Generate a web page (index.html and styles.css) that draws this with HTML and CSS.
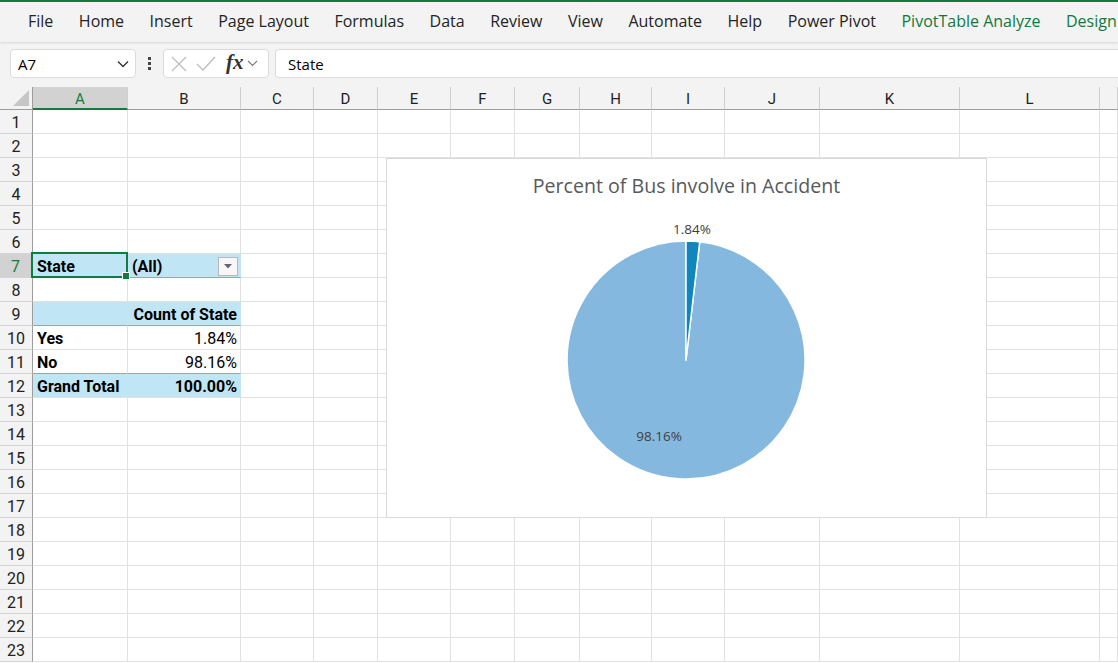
FILE: index.html
```html
<!DOCTYPE html>
<html>
<head>
<meta charset="utf-8">
<link rel="stylesheet" href="styles.css">
</head>
<body>
<div class="app">
  <nav class="ribbon">
    <span>File</span><span>Home</span><span>Insert</span><span>Page Layout</span><span>Formulas</span><span>Data</span><span>Review</span><span>View</span><span>Automate</span><span>Help</span><span>Power Pivot</span><span class="ctx">PivotTable Analyze</span><span class="ctx">Design</span>
  </nav>
  <div class="fbar">
    <div class="namebox"><span>A7</span>
      <svg width="12" height="8" viewBox="0 0 12 8"><polyline points="1,1.5 6,6.5 11,1.5" fill="none" stroke="#333" stroke-width="1.4"/></svg>
    </div>
    <div class="dots"><i></i><i></i><i></i></div>
    <div class="fbtns">
      <svg width="18" height="18" viewBox="0 0 18 18"><path d="M2 2L16 16M16 2L2 16" stroke="#bdbdbd" stroke-width="1.3"/></svg>
      <svg width="20" height="18" viewBox="0 0 20 18"><polyline points="1,9 7,15 19,2" fill="none" stroke="#bdbdbd" stroke-width="1.3"/></svg>
      <span class="fx">fx</span>
      <svg width="11" height="7" viewBox="0 0 11 7"><polyline points="1,1 5.5,5.5 10,1" fill="none" stroke="#777" stroke-width="1.1"/></svg>
    </div>
    <div class="finput">State</div>
  </div>
  <div class="sheet">
    <div class="row head">
      <div class="corner"><svg width="18" height="18" viewBox="0 0 18 18"><polygon points="17,1 17,17 1,17" fill="#c6c6c6"/></svg></div>
      <div class="sel">A</div><div>B</div><div>C</div><div>D</div><div>E</div><div>F</div><div>G</div><div>H</div><div>I</div><div>J</div><div>K</div><div>L</div><div></div>
    </div>
    <div class="row"><div class="rh">1</div><div></div><div></div><div></div><div></div><div></div><div></div><div></div><div></div><div></div><div></div><div></div><div></div><div></div></div>
    <div class="row"><div class="rh">2</div><div></div><div></div><div></div><div></div><div></div><div></div><div></div><div></div><div></div><div></div><div></div><div></div><div></div></div>
    <div class="row"><div class="rh">3</div><div></div><div></div><div></div><div></div><div></div><div></div><div></div><div></div><div></div><div></div><div></div><div></div><div></div></div>
    <div class="row"><div class="rh">4</div><div></div><div></div><div></div><div></div><div></div><div></div><div></div><div></div><div></div><div></div><div></div><div></div><div></div></div>
    <div class="row"><div class="rh">5</div><div></div><div></div><div></div><div></div><div></div><div></div><div></div><div></div><div></div><div></div><div></div><div></div><div></div></div>
    <div class="row"><div class="rh">6</div><div></div><div></div><div></div><div></div><div></div><div></div><div></div><div></div><div></div><div></div><div></div><div></div><div></div></div>
    <div class="row"><div class="rh rsel">7</div><div class="pv pvline b active">State</div><div class="pv pvline b filter">(All)<span class="dd"><svg width="8" height="5" viewBox="0 0 8 5"><polygon points="0,0 8,0 4,4.5" fill="#666"/></svg></span></div><div></div><div></div><div></div><div></div><div></div><div></div><div></div><div></div><div></div><div></div><div></div></div>
    <div class="row"><div class="rh">8</div><div></div><div></div><div></div><div></div><div></div><div></div><div></div><div></div><div></div><div></div><div></div><div></div><div></div></div>
    <div class="row"><div class="rh">9</div><div class="pv pvline"></div><div class="pv pvline b num">Count of State</div><div></div><div></div><div></div><div></div><div></div><div></div><div></div><div></div><div></div><div></div><div></div></div>
    <div class="row"><div class="rh">10</div><div class="b">Yes</div><div class="num">1.84%</div><div></div><div></div><div></div><div></div><div></div><div></div><div></div><div></div><div></div><div></div><div></div></div>
    <div class="row"><div class="rh">11</div><div class="b pvline">No</div><div class="num pvline">98.16%</div><div></div><div></div><div></div><div></div><div></div><div></div><div></div><div></div><div></div><div></div><div></div></div>
    <div class="row"><div class="rh">12</div><div class="pv b">Grand Total</div><div class="pv b num">100.00%</div><div></div><div></div><div></div><div></div><div></div><div></div><div></div><div></div><div></div><div></div><div></div></div>
    <div class="row"><div class="rh">13</div><div></div><div></div><div></div><div></div><div></div><div></div><div></div><div></div><div></div><div></div><div></div><div></div><div></div></div>
    <div class="row"><div class="rh">14</div><div></div><div></div><div></div><div></div><div></div><div></div><div></div><div></div><div></div><div></div><div></div><div></div><div></div></div>
    <div class="row"><div class="rh">15</div><div></div><div></div><div></div><div></div><div></div><div></div><div></div><div></div><div></div><div></div><div></div><div></div><div></div></div>
    <div class="row"><div class="rh">16</div><div></div><div></div><div></div><div></div><div></div><div></div><div></div><div></div><div></div><div></div><div></div><div></div><div></div></div>
    <div class="row"><div class="rh">17</div><div></div><div></div><div></div><div></div><div></div><div></div><div></div><div></div><div></div><div></div><div></div><div></div><div></div></div>
    <div class="row"><div class="rh">18</div><div></div><div></div><div></div><div></div><div></div><div></div><div></div><div></div><div></div><div></div><div></div><div></div><div></div></div>
    <div class="row"><div class="rh">19</div><div></div><div></div><div></div><div></div><div></div><div></div><div></div><div></div><div></div><div></div><div></div><div></div><div></div></div>
    <div class="row"><div class="rh">20</div><div></div><div></div><div></div><div></div><div></div><div></div><div></div><div></div><div></div><div></div><div></div><div></div><div></div></div>
    <div class="row"><div class="rh">21</div><div></div><div></div><div></div><div></div><div></div><div></div><div></div><div></div><div></div><div></div><div></div><div></div><div></div></div>
    <div class="row"><div class="rh">22</div><div></div><div></div><div></div><div></div><div></div><div></div><div></div><div></div><div></div><div></div><div></div><div></div><div></div></div>
    <div class="row"><div class="rh">23</div><div></div><div></div><div></div><div></div><div></div><div></div><div></div><div></div><div></div><div></div><div></div><div></div><div></div></div>

    <div class="chart">
      <div class="chart-title">Percent of Bus involve in Accident</div>
      <svg class="pie" width="599" height="358" viewBox="0 0 599 358">
        <path d="M299 201 L312.73 82.79 A119 119 0 1 1 299 82 Z" fill="#85b8df" stroke="#fff" stroke-width="1.5" stroke-linejoin="round"/>
        <path d="M299 201 L299 82 A119 119 0 0 1 312.73 82.79 Z" fill="#0f87bd" stroke="#fff" stroke-width="1.5" stroke-linejoin="round"/>
        <text x="305" y="75" class="lbl" text-anchor="middle">1.84%</text>
        <text x="272" y="282" class="lbl" text-anchor="middle">98.16%</text>
      </svg>
    </div>
  </div>
</div>
</body>
</html>
```
FILE: styles.css
```css
* { box-sizing: border-box; }
html, body { margin: 0; padding: 0; }
body {
  width: 1118px;
  height: 663px;
  overflow: hidden;
  background: #fff;
  font-family: "Open Sans", "Noto Sans", sans-serif;
  color: #000;
}
.app { display: flex; flex-direction: column; height: 663px; }

.ribbon {
  height: 42px;
  flex: none;
  border-top: 2px solid #107c41;
  background: #f3f3f3;
  display: flex;
  align-items: center;
  gap: 25.5px;
  padding: 0 0 3px 28px;
  font-size: 16px;
  color: #242424;
  white-space: nowrap;
  box-shadow: 0 1px 2px rgba(0,0,0,0.12);
  position: relative;
  z-index: 2;
}
.ribbon .ctx { color: #0e7a3a; }

.fbar {
  height: 45px;
  flex: none;
  background: #f3f3f3;
  display: flex;
  align-items: flex-start;
  padding: 7px 0 0 10px;
}
.namebox {
  width: 126px;
  height: 29px;
  background: #fff;
  border: 1px solid #dcdcdc;
  border-radius: 4px;
  display: flex;
  align-items: center;
  justify-content: space-between;
  padding: 0 6px 0 7px;
  font-size: 15px;
}
.dots {
  width: 27px;
  height: 29px;
  display: flex;
  flex-direction: column;
  align-items: center;
  justify-content: center;
  gap: 2px;
}
.dots i { width: 3px; height: 3px; background: #444; display: block; }
.fbtns {
  width: 106px;
  height: 29px;
  background: #fff;
  border: 1px solid #dcdcdc;
  border-radius: 4px;
  display: flex;
  align-items: center;
  padding: 0 0 0 6px;
  gap: 8px;
}
.fbtns .fx {
  font-family: "Liberation Serif", serif;
  font-style: italic;
  font-weight: bold;
  font-size: 21px;
  color: #333;
  margin-left: 2px;
  margin-right: -5px;
  margin-top: -3px;
}
.finput {
  flex: 1;
  margin-left: 6px;
  height: 29px;
  background: #fff;
  border: 1px solid #dcdcdc;
  border-right: none;
  border-radius: 4px 0 0 4px;
  display: flex;
  align-items: center;
  padding-left: 12px;
  font-size: 15px;
}

.sheet {
  position: relative;
  flex: 1;
  overflow: hidden;
  font-family: "Roboto", "Noto Sans", sans-serif;
  font-size: 16px;
}
.row {
  display: grid;
  grid-template-columns: 33px 95px 113px 73px 64px 73px 64px 65px 72px 73px 95px 140px 140px 1fr;
  height: 24px;
}
.row > div {
  border-right: 1px solid #e1e1e1;
  border-bottom: 1px solid #e1e1e1;
  display: flex;
  align-items: center;
  padding: 1px 3px 0 4px;
  white-space: nowrap;
  position: relative;
}
.row.head { height: 23px; background: #f3f3f3; }
.row.head > div {
  justify-content: center;
  border-right: 1px solid #cfcfcf;
  border-bottom: 1px solid #9d9d9d;
  color: #222;
  padding: 2px 0 0 0;
  font-size: 15px;
}
.row.head > .corner {
  justify-content: flex-end;
  align-items: flex-end;
  padding: 0 2px 2px 0;
  border-right: 1px solid #9d9d9d;
}
.row.head > .sel {
  background: #d2d2d2;
  color: #107c41;
  border-bottom: 2px solid #107c41;
}
.row > .rh {
  background: #f3f3f3;
  justify-content: center;
  border-right: 1px solid #9d9d9d;
  border-bottom: 1px solid #d4d4d4;
  color: #222;
  padding: 1px 0 0 0;
}
.row > .rh.rsel {
  background: #d2d2d2;
  color: #107c41;
  border-right: 2px solid #107c41;
}
.row > .pv { background: #c0e6f5; border-right-color: #c0e6f5; }
.row > .pvline { border-bottom: 1px solid #61b8e3; }
.b { font-weight: bold; }
.row > .num { justify-content: flex-end; }
.row > .active::after {
  content: "";
  position: absolute;
  left: -2px; top: -2px; right: -1px; bottom: -1px;
  border: 2px solid #107c41;
}
.row > .active::before {
  content: "";
  position: absolute;
  right: -3px; bottom: -3px;
  width: 6px; height: 6px;
  background: #107c41;
  border: 1px solid #fff;
  z-index: 2;
}
.filter { justify-content: space-between; }
.dd {
  width: 20px;
  height: 19px;
  border: 1px solid #b8b8b8;
  background: #f7f7f7;
  display: flex;
  align-items: center;
  justify-content: center;
  margin-right: -1px;
}

.chart {
  position: absolute;
  left: 386px;
  top: 71px;
  width: 601px;
  height: 360px;
  background: #fff;
  border: 1px solid #d9d9d9;
}
.chart-title {
  position: absolute;
  left: 0; right: 0; top: 13px;
  text-align: center;
  font-family: "Open Sans", "Noto Sans", sans-serif;
  font-size: 19.6px;
  color: #595959;
}
.pie { position: absolute; left: 0; top: 0; }
.lbl {
  font-family: "Open Sans", "Noto Sans", sans-serif;
  font-size: 13.5px;
  fill: #404040;
}
```
